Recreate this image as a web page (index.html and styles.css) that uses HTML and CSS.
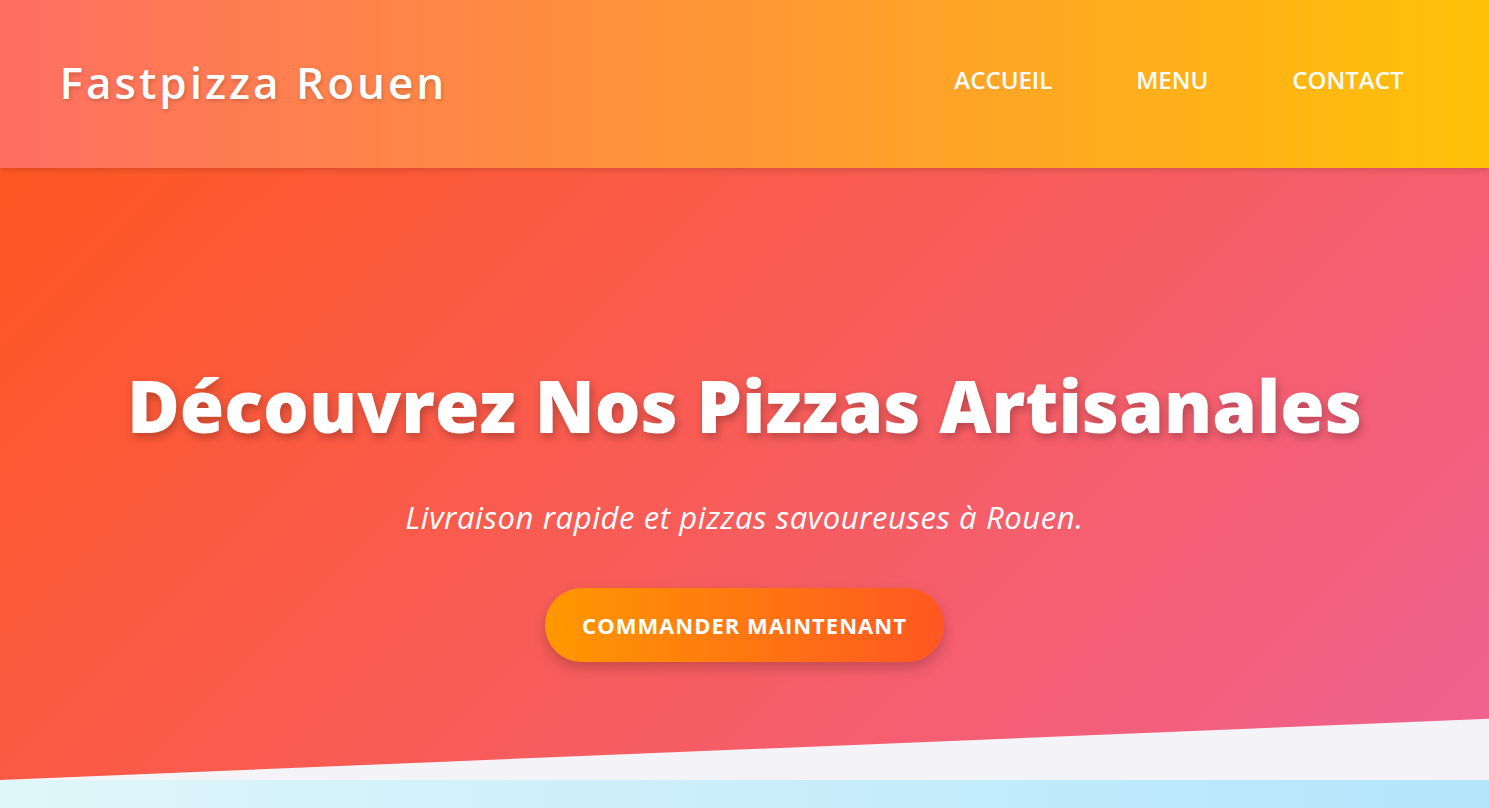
FILE: index.html
```html
<!DOCTYPE html>
<html lang="fr">
<head>
    <meta charset="UTF-8">
    <title>Fastpizza Rouen</title>
    <link rel="stylesheet" href="styles.css">
</head>
<body>
<header class="header">
    <a class="logo" href="#">Fastpizza Rouen</a>
    <nav>
        <ul class="nav">
            <li><a href="#">Accueil</a></li>
            <li><a href="#">Menu</a></li>
            <li><a href="#">Contact</a></li>
        </ul>
    </nav>
</header>

<section class="hero">
    <h1>Découvrez Nos Pizzas Artisanales</h1>
    <p class="tagline">Livraison rapide et pizzas savoureuses à Rouen.</p>
    <a class="btn" href="#">Commander maintenant</a>
</section>

<section class="menu-section"></section>
</body>
</html>
```

FILE: styles.css
```css
* {
    margin: 0;
    padding: 0;
    box-sizing: border-box;
}

ul {
    list-style: none;
}

a {
    text-decoration: none;
    color: inherit;
}

body {
    font-family: "Open Sans", "Noto Sans", sans-serif;
    background-color: #f4f3f8;
    color: #fff;
    overflow: hidden;
}

/* en-tête */
.header {
    height: 168px;
    padding: 0 4%;
    display: flex;
    align-items: center;
    justify-content: space-between;
    background: linear-gradient(90deg, #ff6f61, #ffc107);
    box-shadow: 0 2px 6px rgba(0, 0, 0, 0.15);
    position: relative;
    z-index: 2;
}

.logo {
    font-family: "Open Sans", sans-serif;
    font-size: 44px;
    font-weight: 600;
    letter-spacing: 3px;
    text-shadow: 1px 2px 4px rgba(0, 0, 0, 0.2);
    margin-top: -4px;
}

.nav {
    display: flex;
    gap: 36px;
    margin-top: -10px;
    margin-right: 2px;
}

.nav a {
    display: block;
    padding: 8px 24px;
    font-size: 24px;
    font-weight: 600;
    text-transform: uppercase;
}

/* bandeau principal */
.hero {
    height: 612px;
    padding-top: 194px;
    display: flex;
    flex-direction: column;
    align-items: center;
    text-align: center;
    background: linear-gradient(135deg, #ff5722, #f06292);
    clip-path: polygon(0 0, 100% 0, 100% 90%, 0 100%);
}

.hero h1 {
    font-size: 72px;
    font-weight: 800;
    line-height: 1.2;
    text-shadow: 2px 4px 8px rgba(0, 0, 0, 0.25);
}

.tagline {
    margin-top: 48px;
    font-size: 31px;
    font-style: italic;
    letter-spacing: 0.6px;
}

.btn {
    margin-top: 50px;
    height: 74px;
    padding: 0 37px;
    display: flex;
    align-items: center;
    border-radius: 40px;
    background: linear-gradient(90deg, #ff9800, #ff5722);
    box-shadow: 0 6px 14px rgba(0, 0, 0, 0.2);
    font-size: 22px;
    font-weight: 700;
    letter-spacing: 1px;
    text-transform: uppercase;
}

.menu-section {
    height: 28px;
    background: linear-gradient(90deg, #e0f7fa, #b3e5fc);
}
```
